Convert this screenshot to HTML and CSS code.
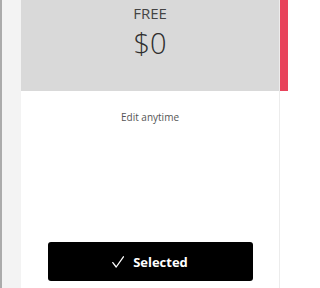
FILE: index.html
```html
<!DOCTYPE html>
<html>
<head>
<meta charset="utf-8">
<link rel="stylesheet" href="styles.css">
</head>
<body>
<div class="page">
  <div class="rail"></div>
  <div class="card">
    <div class="card-head">
      <div class="plan">FREE</div>
      <div class="price">$0</div>
    </div>
    <div class="card-body">
      <div class="note">Edit anytime</div>
      <button class="btn" type="button">
        <svg class="check" width="12" height="12" viewBox="0 0 12 12"><path d="M0.8 6.6 L4.2 11 L11.4 0.8" fill="none" stroke="#fff" stroke-width="1.3" stroke-linecap="round" stroke-linejoin="round"/></svg>
        <span>Selected</span>
      </button>
    </div>
  </div>
  <div class="next">
    <div class="next-head"></div>
  </div>
</div>
</body>
</html>
```
FILE: styles.css
```css
html, body {
  margin: 0;
  padding: 0;
  background: #ffffff;
}
body {
  font-family: "Open Sans", "Liberation Sans", sans-serif;
  color: #333333;
}
.page {
  display: flex;
  height: 288px;
  width: 288px;
  overflow: hidden;
}
.rail {
  width: 19px;
  flex: none;
  background: #f3f3f3;
  border-left: 2px solid #ababab;
}
.card {
  width: 258px;
  flex: none;
  display: flex;
  flex-direction: column;
  background: #ffffff;
  border-right: 1px solid #ececec;
}
.card-head {
  height: 91px;
  background: #d9d9d9;
  text-align: center;
  padding-top: 4px;
  box-sizing: border-box;
}
.plan {
  font-size: 15px;
  line-height: 18px;
  color: #444444;
}
.price {
  font-size: 29px;
  line-height: 33px;
  margin-top: 4px;
  font-weight: 300;
  color: #2e2e2e;
}
.card-body {
  flex: 1;
  display: flex;
  flex-direction: column;
  align-items: center;
  padding: 19px 0 7px;
}
.note {
  font-size: 10px;
  line-height: 14px;
  color: #555555;
}
.btn {
  margin-top: auto;
  width: 205px;
  height: 39px;
  background: #000000;
  color: #ffffff;
  border: none;
  border-radius: 3px;
  display: flex;
  align-items: center;
  justify-content: center;
  gap: 9px;
  font-family: "Open Sans", "Liberation Sans", sans-serif;
  font-weight: 700;
  font-size: 13px;
  padding: 0;
}
.check {
  display: block;
}
.next {
  flex: 1;
  background: #ffffff;
}
.next-head {
  height: 91px;
  background: #e8435b;
}
```
